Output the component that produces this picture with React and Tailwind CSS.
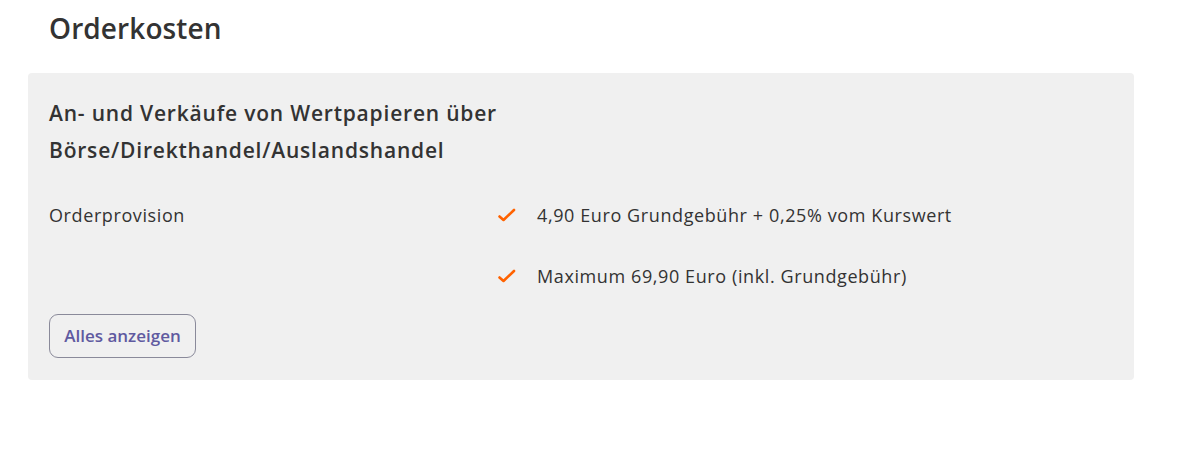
import React from "react";

function Check() {
  return (
    <svg width="18" height="14" viewBox="0 0 18 14" className="shrink-0">
      <path d="M1.5 8.5 L5.5 12 L16 2" fill="none" stroke="#ff6200" strokeWidth="2.6" strokeLinecap="round" strokeLinejoin="round" />
    </svg>
  );
}

export default function App() {
  return (
    <div className="w-[1200px] h-[451px] bg-white text-[#333333]" style={{ fontFamily: '"Open Sans", "Noto Sans", sans-serif' }}>
      <div className="pl-[49px] pt-[8px]">
        <h1 className="text-[28px] leading-[40px] font-semibold text-[#333333] tracking-[0.1px]">Orderkosten</h1>
      </div>
      <div className="ml-[28px] mt-[25px] w-[1106px] rounded-[4px] bg-[#f0f0f0] px-[21px] pt-[22px] pb-[22px]">
        <h2 className="text-[21px] leading-[37px] font-semibold text-[#333333] tracking-[0.8px]">
          An- und Verkäufe von Wertpapieren über
          <br />
          Börse/Direkthandel/Auslandshandel
        </h2>
        <div className="mt-[33px] flex">
          <div className="w-[449px] text-[18px] leading-[26px] text-[#333333] tracking-[0.6px]">Orderprovision</div>
          <div className="flex flex-col gap-[35px]">
            <div className="flex items-center gap-[21px] text-[18px] leading-[26px] text-[#333333] tracking-[0.6px]">
              <Check />
              <span>4,90 Euro Grundgebühr + 0,25% vom Kurswert</span>
            </div>
            <div className="flex items-center gap-[21px] text-[18px] leading-[26px] text-[#333333] tracking-[0.6px]">
              <Check />
              <span>Maximum 69,90 Euro (inkl. Grundgebühr)</span>
            </div>
          </div>
        </div>
        <button className="mt-[25px] h-[44px] w-[147px] rounded-[9px] border border-[#8a8a9a] text-[17px] font-semibold text-[#5f5aa0] flex items-center justify-center">
          Alles anzeigen
        </button>
      </div>
    </div>
  );
}
